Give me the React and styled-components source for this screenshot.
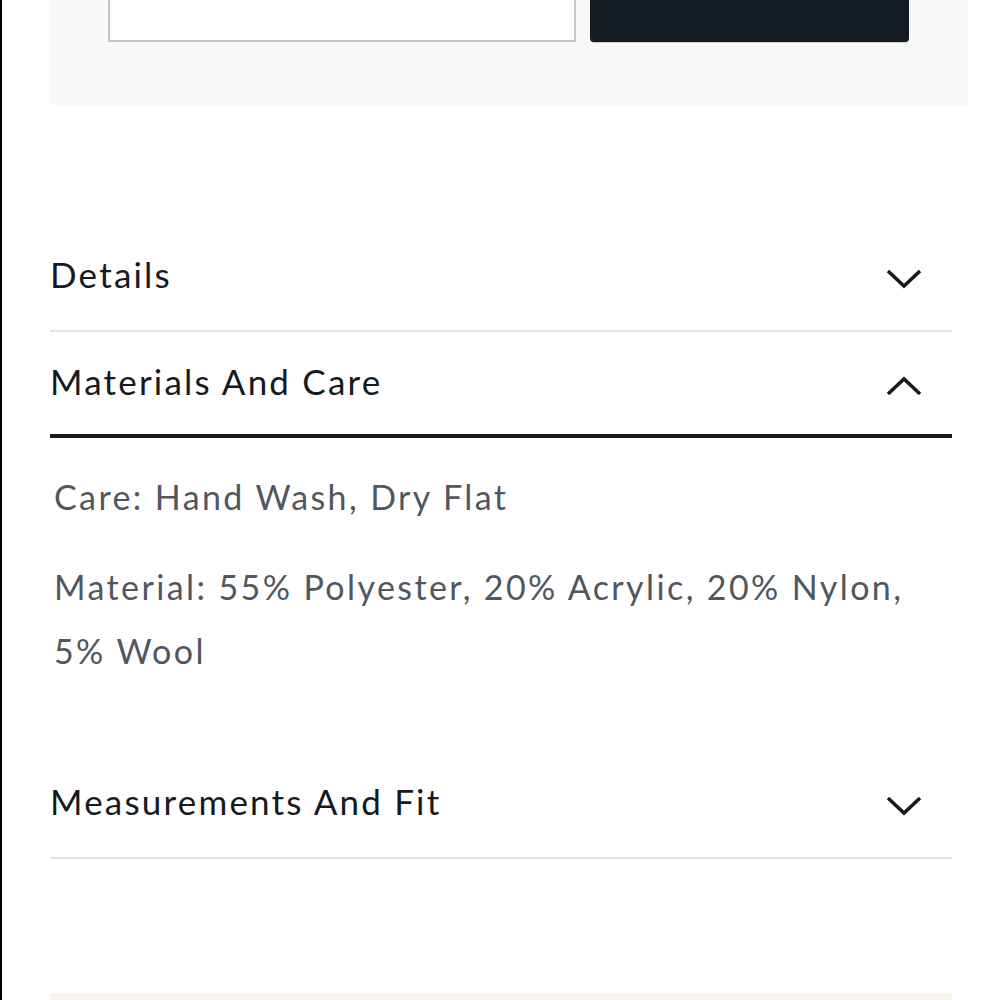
import { useState } from 'react';
import styled, { createGlobalStyle } from 'styled-components';

const GlobalStyle = createGlobalStyle`
  html, body {
    margin: 0;
    padding: 0;
    background: #ffffff;
  }
  body {
    font-family: Lato, "Noto Sans", "Liberation Sans", sans-serif;
    overflow: hidden;
  }
`;

const Page = styled.div`
  min-height: 1000px;
  border-left: 2px solid #000;
  box-sizing: border-box;
  padding-left: 48px;
  padding-right: 32px;
`;

// pannello grigio con il campo e il bottone (tagliato in alto)
const FormPanel = styled.div`
  margin-top: -20px;
  height: 125px;
  box-sizing: border-box;
  background: #f8f8f8;
  display: flex;
  align-items: flex-start;
  gap: 14px;
  padding: 0 59px 0 58px;
`;

const Field = styled.input`
  width: 468px;
  height: 62px;
  box-sizing: border-box;
  border: 2px solid #c6c6c6;
  background: #fff;
  outline: none;
`;

const SubmitButton = styled.button`
  width: 319px;
  height: 62px;
  border: none;
  border-radius: 0 0 4px 4px;
  background: #131a22;
  box-shadow: 0 1px 0 #c9ccd0;
`;

const Accordion = styled.div`
  margin-top: 123px;
  width: 902px;
`;

const Header = styled.button`
  width: 100%;
  height: ${({ $open }) => ($open ? '106px' : '104px')};
  display: flex;
  align-items: center;
  justify-content: space-between;
  padding: ${({ $open }) => ($open ? '0 30px 4px 0' : '0 30px 10px 0')};
  box-sizing: border-box;
  background: none;
  border: none;
  border-bottom: ${({ $open }) => ($open ? '4px solid #131a22' : '2px solid #e3e3e3')};
  cursor: pointer;
  font-family: inherit;
`;

const Title = styled.span`
  font-size: 35px;
  letter-spacing: 2.2px;
  color: #151a21;
  font-weight: 400;
`;

const Panel = styled.div`
  padding: 27px 0 72px 4px;
`;

const Para = styled.p`
  margin: 0;
  font-size: 34px;
  line-height: 64px;
  letter-spacing: 2.4px;
  color: #52575e;

  & + & {
    margin-top: 26px;
  }
`;

const ChevronSvg = styled.svg`
  flex-shrink: 0;
  margin-top: 10px;
`;

const Chevron = ({ up }) => (
  <ChevronSvg width="36" height="20" viewBox="0 0 36 20" fill="none">
    <polyline
      points={up ? '2,18 18,3 34,18' : '2,2 18,17 34,2'}
      stroke="#151a21"
      strokeWidth="3.5"
      strokeLinecap="butt"
      strokeLinejoin="miter"
    />
  </ChevronSvg>
);

const BottomStrip = styled.div`
  margin-top: 134px;
  width: 902px;
  height: 20px;
  background: #f7f4ed;
`;

const sections = [
  { title: 'Details' },
  {
    title: 'Materials And Care',
    body: [
      'Care: Hand Wash, Dry Flat',
      'Material: 55% Polyester, 20% Acrylic, 20% Nylon, 5% Wool',
    ],
  },
  { title: 'Measurements And Fit' },
];

export default function App() {
  const [openIndex, setOpenIndex] = useState(1);

  return (
    <>
      <GlobalStyle />
      <Page>
        <FormPanel>
          <Field type="text" />
          <SubmitButton type="button" />
        </FormPanel>

        <Accordion>
          {sections.map((section, i) => {
            const open = openIndex === i;
            return (
              <div key={section.title}>
                <Header $open={open} onClick={() => setOpenIndex(open ? -1 : i)}>
                  <Title>{section.title}</Title>
                  <Chevron up={open} />
                </Header>
                {open && section.body && (
                  <Panel>
                    {section.body.map((line) => (
                      <Para key={line}>{line}</Para>
                    ))}
                  </Panel>
                )}
              </div>
            );
          })}
        </Accordion>

        <BottomStrip />
      </Page>
    </>
  );
}
